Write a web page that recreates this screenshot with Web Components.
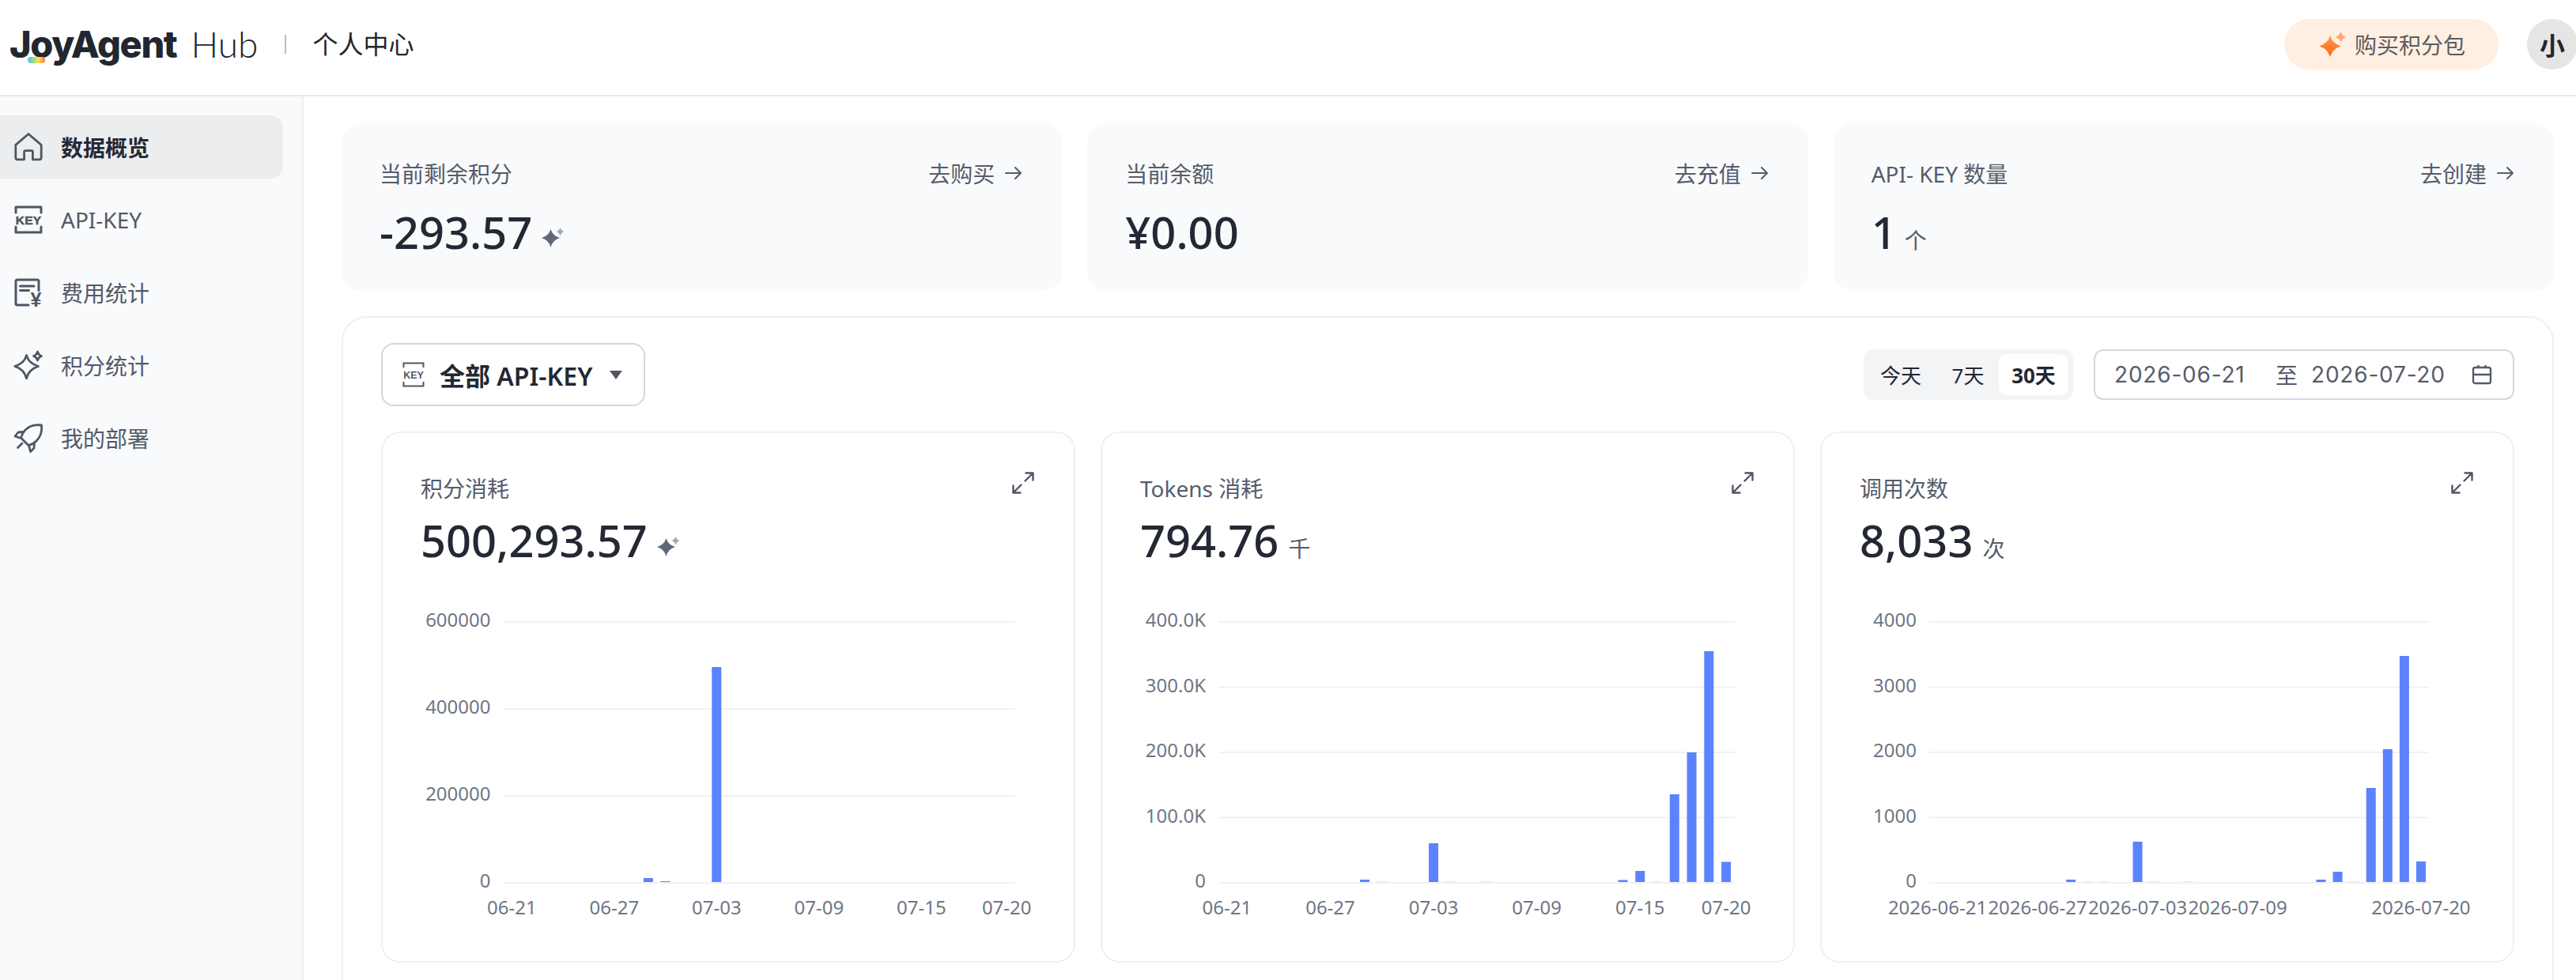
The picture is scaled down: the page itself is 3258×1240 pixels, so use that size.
<!DOCTYPE html>
<html lang="zh">
<head>
<meta charset="utf-8">
<title>JoyAgent Hub</title>
<style>
    html, body { margin: 0; height: 100%; overflow: hidden; background: #fff; }
    body { font-family: "Noto Sans", "Noto Sans CJK SC", sans-serif; color: #232834; }
    .layout { display: flex; height: 1118px; }
</style>
</head>
<body>
<app-header></app-header>
<div class="layout">
    <side-nav>
        <nav-item icon="home" active>数据概览</nav-item>
        <nav-item icon="key">API-KEY</nav-item>
        <nav-item icon="fee">费用统计</nav-item>
        <nav-item icon="star">积分统计</nav-item>
        <nav-item icon="rocket">我的部署</nav-item>
    </side-nav>
    <dash-main>
        <stat-card label="当前剩余积分" link="去购买" value="-293.57" spark></stat-card>
        <stat-card label="当前余额" link="去充值" value="¥0.00"></stat-card>
        <stat-card label="API- KEY 数量" link="去创建" value="1" unit="个"></stat-card>
        <chart-panel slot="panel">
            <chart-card label="积分消耗" value="500,293.57" spark left="152.5" right="800"
                ticks="0,200000,400000,600000"
                xlabels="0:06-21,6:06-27,12:07-03,18:07-09,24:07-15,29:07-20"
                bars="8:5,9:1,12:272"></chart-card>
            <chart-card label="Tokens 消耗" value="794.76" unit="千" left="147" right="800"
                ticks="0,100.0K,200.0K,300.0K,400.0K"
                xlabels="0:06-21,6:06-27,12:07-03,18:07-09,24:07-15,29:07-20"
                bars="8:3,9:f,12:49,13:f,15:f,23:2.5,24:14,25:f,26:111,27:164,28:292,29:25.5"></chart-card>
            <chart-card label="调用次数" value="8,033" unit="次" left="136" right="768.5"
                ticks="0,1000,2000,3000,4000"
                xlabels="0:2026-06-21,6:2026-06-27,12:2026-07-03,18:2026-07-09,29:2026-07-20"
                bars="8:3,9:f,10:f,12:51,13:f,15:f,23:3,24:13,25:f,26:119,27:168,28:286,29:26"></chart-card>
        </chart-panel>
    </dash-main>
</div>

<script>
const ICONS = {
    home: `<path d="M18 1.500 1.800 15.400v16.200c0 1.300 1 2.200 2.200 2.200h8.600v-9.600c0-.9.7-1.600 1.600-1.600h7.600c.9 0 1.600.7 1.600 1.600v9.600H32c1.200 0 2.200-.9 2.200-2.200V15.400L18 1.500Z"/>`,
    key: `<path d="M2 9V2h32v7M2 27v7h32v-7" stroke-width="3"/>
        <text x="18" y="23.500" text-anchor="middle" font-family="Liberation Sans, sans-serif" font-weight="700" font-size="15.500" fill="currentColor" stroke="currentColor" stroke-width=".5" letter-spacing=".2">KEY</text>`,
    fee: `<path d="M31 15.500V4c0-1.100-.9-2-2-2H4c-1.100 0-2 .9-2 2v28c0 1.100.9 2 2 2h14" stroke-width="3"/><path d="M7.500 10h17.500M7.500 15.500h11" stroke-width="3"/>
        <text x="27.500" y="35.500" text-anchor="middle" font-family="Liberation Sans, sans-serif" font-weight="700" font-size="25" fill="currentColor" stroke="none">¥</text>`,
    star: `<path d="M15.500 5.500Q18 15.500 30.500 19.500 18 23.500 15.500 35 13 23.500 .8 19.500 13 15.500 15.500 5.500Z"/><path d="M29.500 1q1 4 5 5.500-4 1.500-5 5.500-1-4-5-5.500 4-1.500 5-5.500Z"/>`,
    rocket: `<path d="M34.500 2C26 .5 19 3 14 8c-3 3-4.500 6-5.500 10l9.500 9.500c4-1 7-2.500 10-5.500 5-5 7.500-12 6.500-20Z"/><path d="M11 10.500 5 11l-4 5 6 2M25.500 25l-.5 6-4.500 4.500-2-7.500M4.500 30.500 10 25"/>`
};

class AppHeader extends HTMLElement {
    constructor() {
        super();
        this.attachShadow({ mode: "open" });
        this.shadowRoot.innerHTML = `
            <style>
                :host { display: flex; align-items: center; height: 120px; border-bottom: 2px solid #e9e9ea; background: #fff; padding: 0 0 0 12px; }
                .logo { position: relative; font-family: Inter, sans-serif; font-weight: 800; font-size: 47px; letter-spacing: -1.400px; color: #22262f; line-height: 60px; margin-top: -9px; }
                .dot { position: absolute; left: 23px; top: 46px; width: 22px; height: 8px; border-radius: 4px; background: linear-gradient(90deg, #58c3f0, #8fe08a 35%, #ffe25a 60%, #ff7a45); }
                .hub { font-family: Lato, sans-serif; font-weight: 300; font-size: 46px; color: #22262f; line-height: 60px; margin: -9px 0 0 18px; }
                .sep { width: 2px; height: 24px; background: #bcbcbf; margin: -8px 0 0 34px; }
                .page { font-size: 32px; line-height: 44px; color: #262626; margin: -9px 0 0 33px; }
                .grow { flex: 1; }
                .buy { display: flex; align-items: center; height: 64px; width: 271px; box-sizing: border-box; padding-left: 44px; border-radius: 32px; background: #ffeee2; color: #5c5c5c; font-size: 28px; margin-top: -8px; }
                .buy svg { margin-right: 11px; }
                .avatar { display: flex; align-items: center; justify-content: center; width: 64px; height: 64px; border-radius: 50%; background: #e5e5e5; color: #262626; font-size: 32px; font-weight: 700; margin: -8px -2px 0 36px; flex: none; }
            </style>
            <div class="logo">JoyAgent<span class="dot"></span></div>
            <div class="hub">Hub</div>
            <div class="sep"></div>
            <div class="page">个人中心</div>
            <div class="grow"></div>
            <div class="buy">
                <svg width="34" height="34" viewBox="0 0 34 34">
                    <defs><linearGradient id="o" x1="0" y1="0" x2="0" y2="1"><stop offset="0" stop-color="#ff9a55"/><stop offset="1" stop-color="#ff6410"/></linearGradient></defs>
                    <path d="M14 6Q17 16 27.500 19.500 17 23 14 33 11 23 .5 19.500 11 16 14 6Z" fill="url(#o)"/>
                    <path d="M27.500 1Q29 6 34 8 29 10 27.500 15 26 10 21 8 26 6 27.500 1Z" fill="#ffa877"/>
                </svg>
                购买积分包
            </div>
            <div class="avatar">小</div>
        `;
    }
}

class SideNav extends HTMLElement {
    constructor() {
        super();
        this.attachShadow({ mode: "open" });
        this.shadowRoot.innerHTML = `
            <style>
                :host { display: flex; flex-direction: column; gap: 12px; flex: none; width: 384px; border-right: 2px solid #eeeff1; background: #f9fafb; padding: 24px 24px 0 0; box-sizing: border-box; }
            </style>
            <slot></slot>
        `;
    }
}

class NavItem extends HTMLElement {
    constructor() {
        super();
        this.attachShadow({ mode: "open" });
    }

    connectedCallback() {
        const icon = this.getAttribute("icon");
        this.shadowRoot.innerHTML = `
            <style>
                :host { display: flex; align-items: center; gap: 23px; height: 80px; padding-left: 18px; border-radius: 0 16px 16px 0; font-size: 28px; color: #515968; }
                :host([active]) { background: #ecedef; color: #232834; font-weight: 700; }
                svg { flex: none; overflow: visible; fill: none; stroke: #4f5665; stroke-width: 2.800; stroke-linejoin: round; stroke-linecap: round; color: #4f5665; }
            </style>
            <svg width="36" height="36" viewBox="0 0 36 36">${ICONS[icon]}</svg>
            <slot></slot>
        `;
    }
}

class DashMain extends HTMLElement {
    constructor() {
        super();
        this.attachShadow({ mode: "open" });
        this.shadowRoot.innerHTML = `
            <style>
                :host { display: block; flex: 1; min-width: 0; padding: 34px 28px 0 48px; overflow: hidden; }
                .stats { display: grid; grid-template-columns: repeat(3, 1fr); gap: 32px; margin-bottom: 32px; }
            </style>
            <div class="stats"><slot></slot></div>
            <slot name="panel"></slot>
        `;
    }
}

const SPARK = `<svg class="spark" width="30" height="26" viewBox="0 0 30 26">
    <path d="M11.500 2Q14 10.500 23 13 14 15.500 11.500 25 9 15.500 0 13 9 10.500 11.500 2Z" fill="#61677a"/>
    <path d="M23.500 0Q24.800 3.800 28.500 5 24.800 6.200 23.500 10.500 22.200 6.200 18.500 5 22.200 3.800 23.500 0Z" fill="#9ea5b8"/>
</svg>`;

class StatCard extends HTMLElement {
    constructor() {
        super();
        this.attachShadow({ mode: "open" });
    }

    connectedCallback() {
        const unit = this.getAttribute("unit");
        this.shadowRoot.innerHTML = `
            <style>
                :host { display: block; height: 212px; box-sizing: border-box; padding: 43px 50px 0 48px; background: #f9fafb; border-radius: 24px; }
                .head { display: flex; justify-content: space-between; align-items: center; height: 40px; font-size: 28px; color: #555c6b; }
                .link { display: flex; align-items: center; gap: 13px; }
                .row { display: flex; align-items: baseline; margin-top: 19px; color: #232834; height: 70px; line-height: 70px; }
                .value { font-size: 56px; font-weight: 500; }
                .unit { font-size: 28px; color: #555c6b; margin-left: 10px; }
                .spark { margin-left: 12px; align-self: center; margin-top: 15px; }
            </style>
            <div class="head">
                <span>${this.getAttribute("label")}</span>
                <span class="link">${this.getAttribute("link")}
                    <svg width="22" height="22" viewBox="0 0 22 22" fill="none" stroke="#555c6b" stroke-width="2" stroke-linecap="round" stroke-linejoin="round"><path d="M1 11h19M13 4l7 7-7 7"/></svg>
                </span>
            </div>
            <div class="row">
                <span class="value">${this.getAttribute("value")}</span>
                ${unit ? `<span class="unit">${unit}</span>` : ""}
                ${this.hasAttribute("spark") ? SPARK : ""}
            </div>
        `;
    }
}

class ChartPanel extends HTMLElement {
    constructor() {
        super();
        this.attachShadow({ mode: "open" });
        this.shadowRoot.innerHTML = `
            <style>
                :host { display: block; border: 2px solid #eff0f2; border-radius: 32px; padding: 32px 48px 60px; background: #fff; }
                .bar { display: flex; justify-content: space-between; align-items: center; height: 80px; margin-bottom: 32px; }
                .select { display: flex; align-items: center; width: 334px; height: 80px; box-sizing: border-box; border: 2px solid #d4d7dc; border-radius: 16px; padding-left: 25px; font-size: 32px; font-weight: 600; color: #232834; }
                .select svg.key { fill: none; stroke: #4f5665; stroke-width: 2; margin-right: 19px; flex: none; }
                .caret { margin-left: 22px; flex: none; }
                .right { display: flex; align-items: center; gap: 26px; }
                .seg { display: flex; align-items: center; height: 64px; width: 265px; box-sizing: border-box; padding: 6px; background: #f3f4f6; border-radius: 12px; font-size: 26px; color: #232834; }
                .seg span { display: flex; align-items: center; justify-content: center; height: 52px; border-radius: 10px; }
                .seg .a { width: 90px; margin-left: -4px; }
                .seg .b { width: 68px; margin-left: 6px; }
                .seg .on { width: 88px; margin-left: 5px; background: #fff; font-weight: 700; }
                .dates { display: flex; align-items: center; width: 532px; height: 64px; box-sizing: border-box; border: 2px solid #d4d7dc; border-radius: 12px; padding-left: 24px; font-family: Inter, "Noto Sans CJK SC", sans-serif; font-size: 28px; color: #555c6b; }
                .dates .d { width: 168px; white-space: nowrap; letter-spacing: .8px; }
                .to { margin: 0 17px 0 36px; }
                .dates svg { margin-left: 35px; fill: none; stroke: #555c6b; stroke-width: 2.400; }
                .cards { display: grid; grid-template-columns: repeat(3, 1fr); gap: 32px; }
            </style>
            <div class="bar">
                <div class="select">
                    <svg class="key" width="28" height="32" viewBox="0 0 28 32">
                        <path d="M1.500 7V1.500h25V7M1.500 25v5.500h25V25"/>
                        <text x="14" y="20.500" text-anchor="middle" font-family="Liberation Sans, sans-serif" font-weight="700" font-size="12.500" fill="#4f5665" stroke="none">KEY</text>
                    </svg>
                    全部 API-KEY
                    <svg class="caret" width="16" height="11" viewBox="0 0 16 11"><path d="M0 0h16L8 11Z" fill="#4f5665"/></svg>
                </div>
                <div class="right">
                    <div class="seg"><span class="a">今天</span><span class="b">7天</span><span class="on">30天</span></div>
                    <div class="dates">
                        <span class="d">2026-06-21</span><span class="to">至</span><span class="d">2026-07-20</span>
                        <svg width="26" height="26" viewBox="0 0 26 26"><rect x="2" y="4" width="22" height="20" rx="2.500"/><path d="M2 13h22M8.500 1v3M17.500 1v3"/></svg>
                    </div>
                </div>
            </div>
            <div class="cards"><slot></slot></div>
        `;
    }
}

class ChartCard extends HTMLElement {
    constructor() {
        super();
        this.attachShadow({ mode: "open" });
    }

    connectedCallback() {
        const unit = this.getAttribute("unit");
        this.shadowRoot.innerHTML = `
            <style>
                :host { display: block; height: 672px; box-sizing: border-box; border: 2px solid #eff0f2; border-radius: 24px; background: #fff; }
                .top { height: 212px; box-sizing: border-box; padding: 48px 48px 0; }
                .head { display: flex; justify-content: space-between; height: 44px; font-size: 28px; line-height: 44px; color: #555c6b; }
                .head svg { margin: 1px 2px 0 0; }
                .row { display: flex; align-items: baseline; margin-top: 8px; color: #232834; height: 70px; line-height: 70px; }
                .value { font-size: 56px; font-weight: 500; }
                .unit { font-size: 28px; color: #555c6b; margin-left: 12px; }
                .spark { margin-left: 12px; align-self: center; margin-top: 18px; }
                .plot { display: block; }
                text { font-family: "Noto Sans", sans-serif; font-size: 24px; fill: #6e7686; }
            </style>
            <div class="top">
                <div class="head">
                    <span>${this.getAttribute("label")}</span>
                    <svg width="28" height="28" viewBox="0 0 28 28" fill="none" stroke="#4f5665" stroke-width="2.400" stroke-linecap="round" stroke-linejoin="round"><path d="M26.500 1.500 16.500 11.500M17.500 1.500h9v9M1.500 26.500l10-10M1.500 17.500v9h9"/></svg>
                </div>
                <div class="row">
                    <span class="value">${this.getAttribute("value")}</span>
                    ${unit ? `<span class="unit">${unit}</span>` : ""}
                    ${this.hasAttribute("spark") ? SPARK : ""}
                </div>
            </div>
            ${this.plot()}
        `;
    }

    plot() {
        const left = +this.getAttribute("left");
        const right = +this.getAttribute("right");
        const step = (right - left) / 30;
        const top = 27, base = 357;
        const ticks = this.getAttribute("ticks").split(",");
        let out = "";

        ticks.forEach((t, i) => {
            const y = base - (base - top) * i / (ticks.length - 1);
            out += `<line x1="${left}" x2="${right}" y1="${y}" y2="${y}" stroke="#f0f1f3" stroke-width="2"/>`;
            out += `<text x="${left - 16}" y="${y + 6}" text-anchor="end">${t}</text>`;
        });

        this.getAttribute("bars").split(",").forEach((b) => {
            const [day, h] = b.split(":");
            const x = left + step * (+day + 0.5) - 6;
            if (h === "f") {
                out += `<rect x="${x}" y="355" width="12" height="1" fill="#dfe6ff"/>`;
            } else {
                out += `<rect x="${x}" y="${356 - h}" width="12" height="${h}" fill="#5b82ff"/>`;
            }
        });

        this.getAttribute("xlabels").split(",").forEach((l) => {
            const [day, name] = l.split(":");
            const x = left + step * (+day + 0.5);
            out += `<text x="${x}" y="397" text-anchor="middle">${name}</text>`;
        });

        return `<svg class="plot" width="874" height="440" viewBox="0 0 874 440">${out}</svg>`;
    }
}

customElements.define("app-header", AppHeader);
customElements.define("side-nav", SideNav);
customElements.define("nav-item", NavItem);
customElements.define("dash-main", DashMain);
customElements.define("stat-card", StatCard);
customElements.define("chart-panel", ChartPanel);
customElements.define("chart-card", ChartCard);
</script>
</body>
</html>
